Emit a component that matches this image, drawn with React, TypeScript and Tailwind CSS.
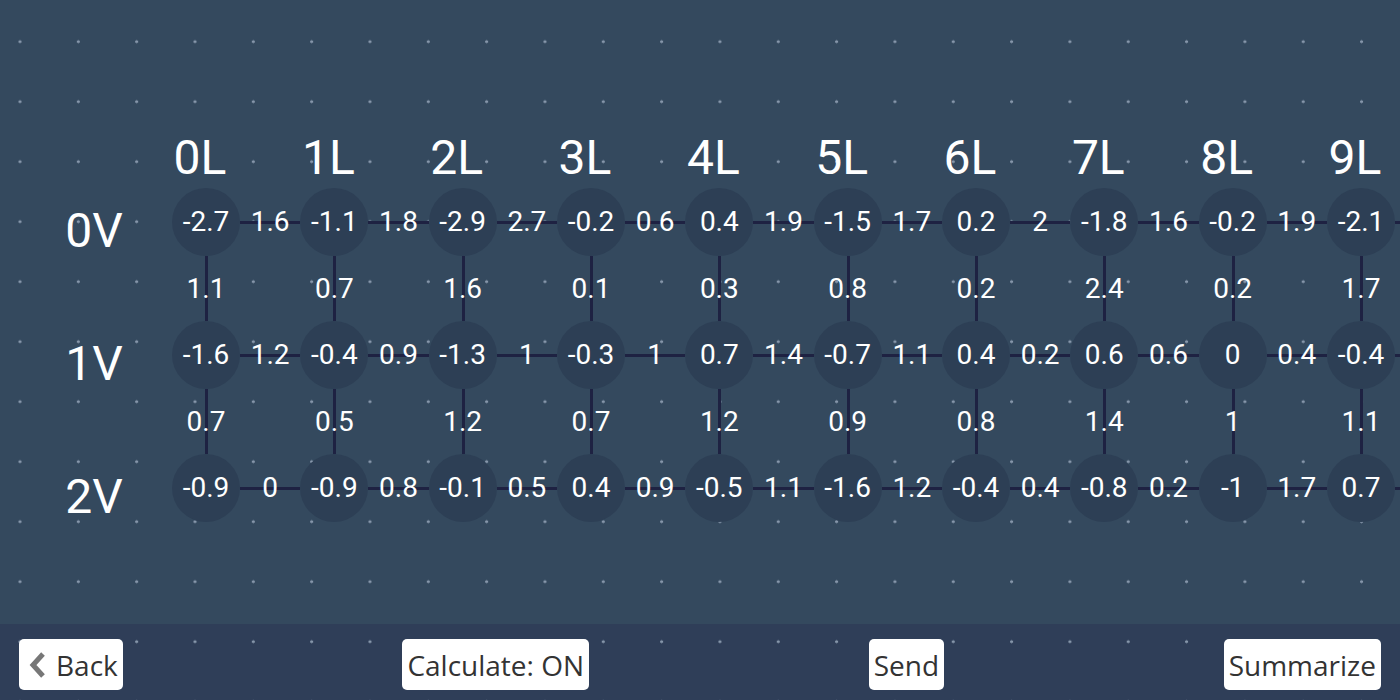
import React from "react";

const rows: string[][] = [
  ["-2.7", "-1.1", "-2.9", "-0.2", "0.4", "-1.5", "0.2", "-1.8", "-0.2", "-2.1"],
  ["-1.6", "-0.4", "-1.3", "-0.3", "0.7", "-0.7", "0.4", "0.6", "0", "-0.4"],
  ["-0.9", "-0.9", "-0.1", "0.4", "-0.5", "-1.6", "-0.4", "-0.8", "-1", "0.7"],
];
const hEdges: string[][] = [
  ["1.6", "1.8", "2.7", "0.6", "1.9", "1.7", "2", "1.6", "1.9", ""],
  ["1.2", "0.9", "1", "1", "1.4", "1.1", "0.2", "0.6", "0.4", ""],
  ["0", "0.8", "0.5", "0.9", "1.1", "1.2", "0.4", "0.2", "1.7", ""],
];
const vEdges: string[][] = [
  ["1.1", "0.7", "1.6", "0.1", "0.3", "0.8", "0.2", "2.4", "0.2", "1.7"],
  ["0.7", "0.5", "1.2", "0.7", "1.2", "0.9", "0.8", "1.4", "1", "1.1"],
];

const dots =
  "bg-[radial-gradient(circle,#8797ab_1.2px,transparent_1.8px)] bg-[size:58.333px_60px]";

function NodeRow({ label, nodes, edges }: { label: string; nodes: string[]; edges: string[] }) {
  return (
    <div className="flex h-[68px] items-center">
      <div className="w-[172px] shrink-0 pl-4 text-center text-[48px] leading-none text-white translate-y-[9px]">
        {label}
      </div>
      {nodes.map((n, i) => (
        <React.Fragment key={i}>
          <div className="flex h-[68px] w-[68px] shrink-0 items-center justify-center rounded-full bg-[#2d3f55] text-[28px] text-white">
            {n}
          </div>
          <div className="relative flex h-[68px] w-[60.333px] shrink-0 items-center justify-center text-[28px] text-white">
            <div className="absolute left-0 right-0 top-[33px] h-[3px] bg-[#1e2242]" />
            <span className="relative">{edges[i]}</span>
          </div>
        </React.Fragment>
      ))}
    </div>
  );
}

function EdgeRow({ edges }: { edges: string[] }) {
  return (
    <div className="flex h-[65px] items-stretch">
      <div className="w-[172px] shrink-0" />
      {edges.map((e, i) => (
        <React.Fragment key={i}>
          <div className="relative flex w-[68px] shrink-0 items-center justify-center text-[28px] text-white">
            <div className="absolute bottom-0 top-0 left-[33px] w-[3px] bg-[#1e2242]" />
            <span className="relative">{e}</span>
          </div>
          <div className="w-[60.333px] shrink-0" />
        </React.Fragment>
      ))}
    </div>
  );
}

function Button({ children }: { children: React.ReactNode }) {
  return (
    <div className="flex h-[51px] items-center rounded-[5px] bg-white px-[5px] text-[28px] leading-none text-[#333] [font-family:'Open_Sans',sans-serif]">
      {children}
    </div>
  );
}

export default function App() {
  return (
    <div className="flex h-[700px] w-[1400px] flex-col overflow-hidden bg-[#34495e] [font-family:Roboto,sans-serif]">
      <div className={`flex-1 overflow-hidden ${dots} bg-[position:-9.17px_11.7px]`}>
        <div className="w-[1500px] pt-[128px]">
          <div className="flex h-[60px] items-center">
            <div className="w-[172px] shrink-0" />
            {Array.from({ length: 10 }).map((_, i) => (
              <React.Fragment key={i}>
                <div className="w-[68px] shrink-0 whitespace-nowrap pr-3 text-center text-[48px] leading-none text-white">
                  {i}L
                </div>
                <div className="w-[60.333px] shrink-0" />
              </React.Fragment>
            ))}
          </div>
          <NodeRow label="0V" nodes={rows[0]} edges={hEdges[0]} />
          <EdgeRow edges={vEdges[0]} />
          <NodeRow label="1V" nodes={rows[1]} edges={hEdges[1]} />
          <EdgeRow edges={vEdges[1]} />
          <NodeRow label="2V" nodes={rows[2]} edges={hEdges[2]} />
        </div>
      </div>
      <div
        className={`flex h-[76px] shrink-0 items-center justify-between bg-[#2f3e58] px-[19px] pt-[5px] ${dots} bg-[position:-9.17px_-12.3px]`}
      >
        <Button>
          <svg width="18" height="26" viewBox="0 0 18 26" className="mr-[9px] ml-[5px]">
            <polyline points="14,2 4,13 14,24" fill="none" stroke="#777" strokeWidth="5" />
          </svg>
          Back
        </Button>
        <Button>Calculate: ON</Button>
        <Button>Send</Button>
        <Button>Summarize</Button>
      </div>
    </div>
  );
}
